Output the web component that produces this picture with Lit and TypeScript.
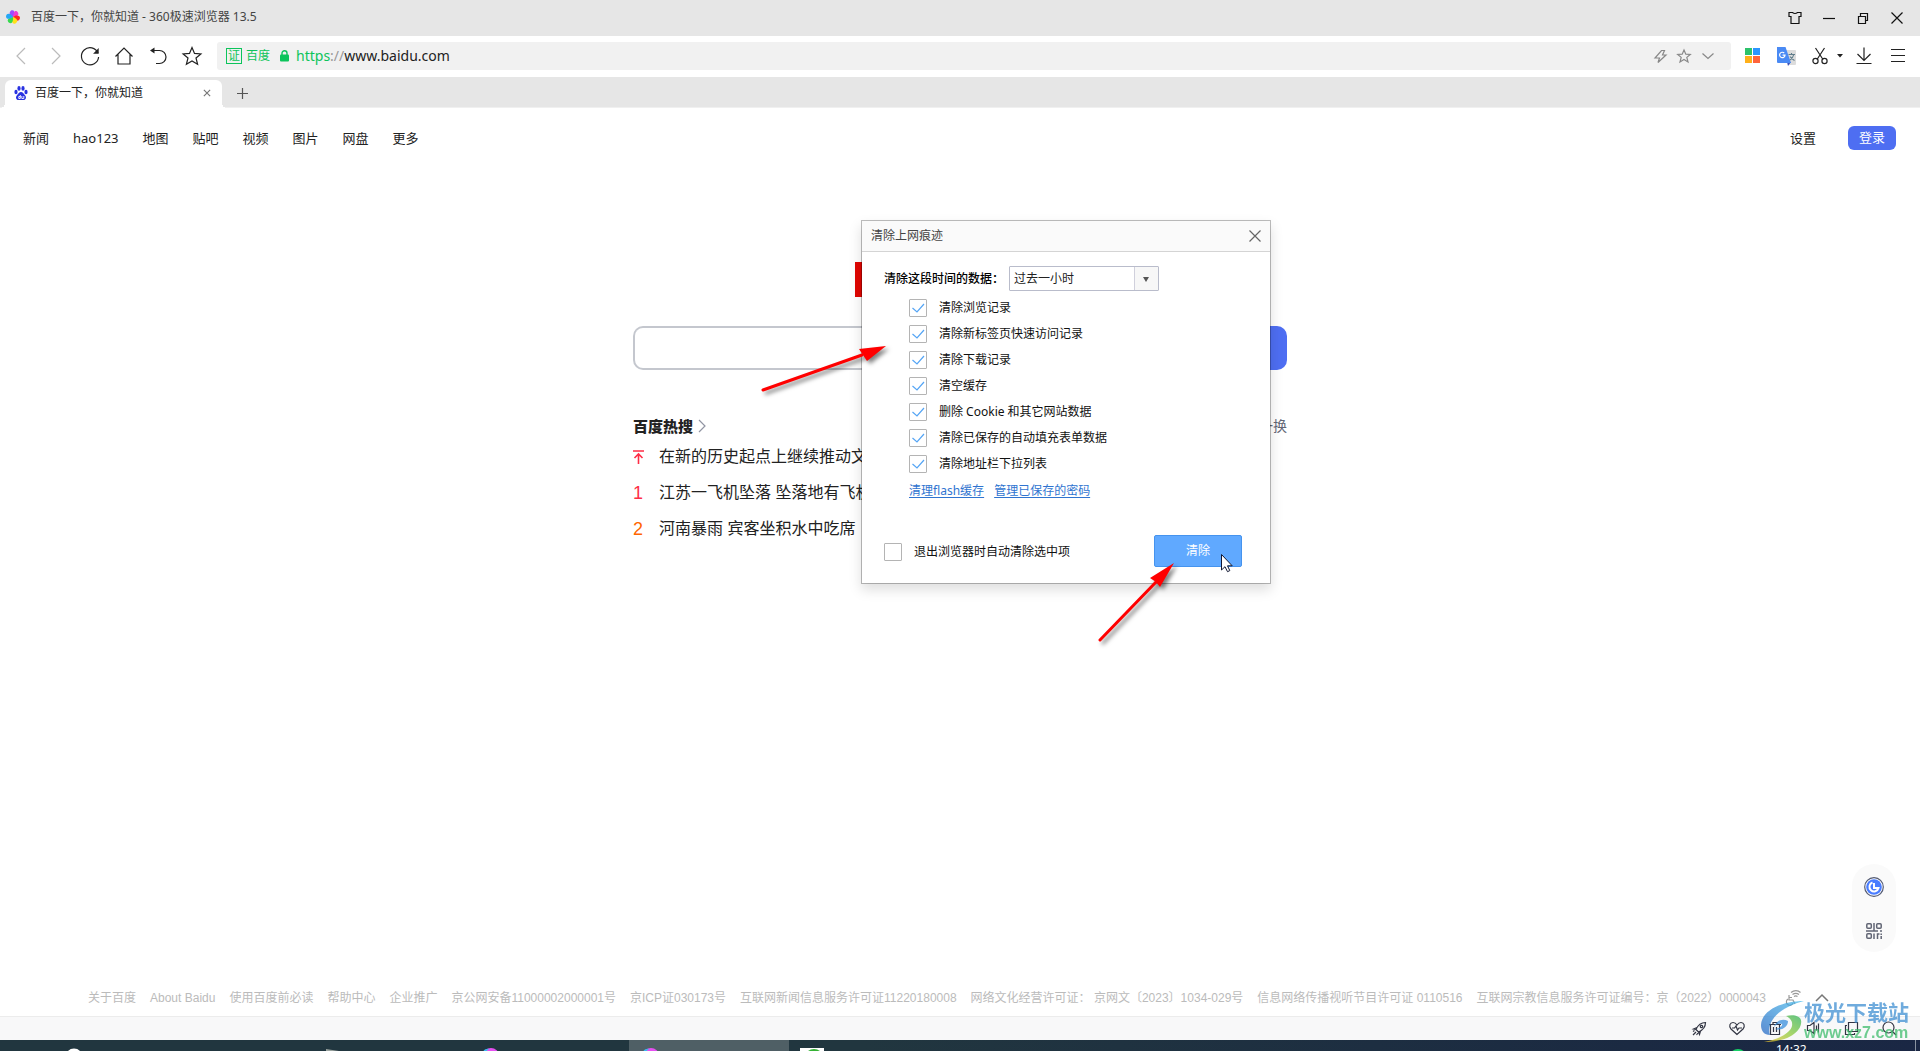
import { LitElement, html, svg, css, TemplateResult, SVGTemplateResult } from "lit";
import { customElement } from "lit/decorators.js";

const icon = (w: number, h: number, body: SVGTemplateResult, cls = "ico"): TemplateResult =>
  html`<svg class=${cls} width=${w} height=${h} viewBox="0 0 ${w} ${h}" aria-hidden="true">${body}</svg>`;

const glyph = {
  back: svg`<path d="M14 2 6 10l8 8"/>`,
  forward: svg`<path d="M6 2l8 8-8 8"/>`,
  reload: svg`<path d="M18 7A8.6 8.6 0 1 0 18.600 11"/><path d="M18.700 2v5.800h-5.600z" class="solid"/>`,
  home: svg`<path d="M1.500 10.500 10 2l8.500 8.500M4 8.500V18h12V8.500"/>`,
  undo: svg`<path d="M3 4.500h8.500a6.500 6.500 0 0 1 0 13H8"/><path d="M6.500 1.500v6L2 4.500z" class="solid"/>`,
  star: svg`<path d="M10 1.500l2.500 5.900 6.400.5-4.900 4.100 1.600 6.300-5.600-3.400-5.600 3.400L6 12 1.100 7.900l6.400-.5z"/>`,
  bolt: svg`<path d="M8.500 1.500h3L9.500 6h3.500L5 13.500 6.500 9H2z"/>`,
  starSmall: svg`<path d="M7 1l1.800 4.200 4.500.3-3.500 2.900 1.200 4.500L7 10.400 3 12.900l1.200-4.500L.7 5.500l4.500-.3z"/>`,
  chevDown: svg`<path d="M1.500 4.500 7 9.500l5.500-5"/>`,
  scissors: svg`<path d="M3.500 1 11 12.500M12.500 1 5 12.500"/><circle cx="3.500" cy="14" r="2.600"/><circle cx="12.500" cy="14" r="2.600"/>`,
  download: svg`<path d="M8 0.500v13M1.500 7 8 13.500 14.500 7M.5 16.500h15"/>`,
  menu: svg`<path d="M0 1.500h14M0 7.500h14M0 13.500h14"/>`,
  shirt: svg`<path d="M4.500 1.500q2.500 2 5 0h3.500v4h-2v7H3v-7H1v-4z"/>`,
  minimise: svg`<path d="M1 7.500h12"/>`,
  restore: svg`<path d="M2.500 5.500h7v7h-7zM4.500 5.500v-3h7v7h-2"/>`,
  close: svg`<path d="M1.500 1.500l11 11M12.500 1.500l-11 11"/>`,
  rocket: svg`<path d="M4 8.500C6 4 9.500 1.500 13.500 1.500c0 4-2.500 7.500-7 9.500zM5 6.500 1.500 8 4 8.500M8.500 10 7.500 13.500 6.500 11M1 14l3-3M4.500 14l1.500-2M1 10.500l1.500-1"/><circle cx="9.500" cy="5.500" r="1.200"/>`,
  heart: svg`<path d="M8 13.500 2 8C-.5 5 1 1.500 4 1.500c2 0 3 1 4 2.500 1-1.500 2-2.500 4-2.500 3 0 4.500 3.500 2 6.500zM3 7h2.500L7 5l1.500 4L10 7h3"/>`,
  trash: svg`<path d="M1 3.500h12M5 3V1.500h4V3M2.500 3.500v10h9v-10M5.500 6v5M8.500 6v5"/>`,
  speaker: svg`<path d="M1.500 4.500H4L8 1.500v11L4 9.500H1.500zM10.500 4.500v5M12.500 2.500v9"/>`,
  windows: svg`<path d="M4.500 1.500h9v9h-9zM3 4.500H1.500v9h9V12"/>`,
  search: svg`<circle cx="6.500" cy="6.500" r="5.500"/><path d="M10.500 10.500l3.500 3.500"/>`,
};

const pinwheel = svg`
  <path d="M7 7C3 6.500 2.500 2.500 5.500.3 9-.5 9.500 3 7 7z" fill="#9b4dff"/>
  <path d="M7 7C7.500 3.500 8 .6 10.500 1 14 3.500 12.500 7 7 7z" fill="#f13ad0"/>
  <path d="M7 7c2.500-2.500 7-2 7 .8C13.800 11.500 9.500 12 7 7z" fill="#ff2a1f"/>
  <path d="M7 7c4 1.500 6 4 2.500 6.500C6 14.500 5 11 7 7z" fill="#ffe11a"/>
  <path d="M7 7c.5 4-1 7.500-4 5.800C.3 10.500 2 7.500 7 7z" fill="#37d94e"/>
  <path d="M7 7C3.500 9.500 0 9.500 0 6.200.6 2.600 4.500 3 7 7z" fill="#24a7f5"/>`;

const paw = svg`<g fill="#2932e1">
  <ellipse cx="2" cy="6" rx="1.600" ry="2.200"/><ellipse cx="5" cy="2.400" rx="1.600" ry="2.300"/>
  <ellipse cx="9" cy="2.400" rx="1.600" ry="2.300"/><ellipse cx="12" cy="6" rx="1.600" ry="2.200"/>
  <path d="M7 6c1.800 0 2.500 1.800 4 3.200 1.800 1.800 1 4.800-1.500 4.800h-5C2 14 1.200 11 3 9.200 4.500 7.800 5.200 6 7 6z"/></g>
  <path d="M6.300 9v3.500H4.800v-2h1.500M7.800 10v2.500h2V10" fill="none" stroke="#fff" stroke-width=".9"/>`;

const disc = svg`<circle cx="13" cy="16" r="8" fill="#e54ff0"/><path d="M4 17c-1-5 3-9 7-8-3 2-4 4-4 8z" fill="#3bb6f0"/>`;

const CHECKS = [
  "清除浏览记录",
  "清除新标签页快速访问记录",
  "清除下载记录",
  "清空缓存",
  "删除 Cookie 和其它网站数据",
  "清除已保存的自动填充表单数据",
  "清除地址栏下拉列表",
];
const NAV = ["新闻", "hao123", "地图", "贴吧", "视频", "图片", "网盘", "更多"];
const LEGAL = [
  "关于百度",
  "About Baidu",
  "使用百度前必读",
  "帮助中心",
  "企业推广",
  "京公网安备11000002000001号",
  "京ICP证030173号",
  "互联网新闻信息服务许可证11220180008",
  "网络文化经营许可证： 京网文〔2023〕1034-029号",
  "信息网络传播视听节目许可证 0110516",
  "互联网宗教信息服务许可证编号：京（2022）0000043",
];

@customElement("browser-chrome")
class BrowserChrome extends LitElement {
  static styles = css`
    :host { display: block; color: #222; font-size: 12px; line-height: 18px; }
    * { box-sizing: border-box; }
    button { border: 0; background: none; padding: 0; color: inherit; font: inherit; display: flex; align-items: center; justify-content: center; }
    .ico { display: block; fill: none; stroke: currentColor; stroke-width: 1.200; overflow: visible; }
    .solid { fill: currentColor; stroke: none; }
    .raw { display: block; flex: none; }
    .title { display: flex; align-items: center; height: 36px; background: #e6e6e6; padding: 0 6px 2px; color: #444; }
    .title .name { margin-left: 11px; flex: 1; }
    .title .win { width: 34px; height: 34px; margin-top: 2px; color: #111; }
    .tools { display: flex; align-items: center; height: 41px; background: #fff; padding: 0 5px 2px 3px; }
    .tools > button { width: 34px; height: 34px; flex: none; }
    .tools > .dim { color: #bbb; width: 35px; }
    .address { flex: 1; display: flex; align-items: center; height: 28px; margin: 0 4px 0 8px; padding: 0 11px 0 9px; background: #f1f1f1; border-radius: 3px; }
    .cert { width: 16px; height: 16px; border: 1px solid #0cc45b; color: #0cc45b; line-height: 14px; text-align: center; }
    .site { color: #0cc45b; margin: 0 10px 0 4px; }
    .url { flex: 1; margin-left: 7px; font-size: 14px; line-height: 20px; }
    .url .secure { color: #0cc45b; }
    .url .sep { color: #999; }
    .address button { width: 24px; height: 24px; color: #888; }
    .tools > .caret { width: 14px; }
    .tools > .snip { width: 26px; margin-left: 4px; }
    .tabs { display: flex; align-items: flex-end; height: 31px; background: #e6e6e6; border-bottom: 1px solid #f0f0f0; padding-left: 5px; }
    .tab { position: relative; display: flex; align-items: center; width: 217px; height: 28px; margin-bottom: -1px; background: #fff; border-radius: 6px 6px 0 0; padding: 0 8px 2px 9px; }
    .tab::before, .tab::after { content: ""; position: absolute; bottom: 0; width: 5px; height: 5px; }
    .tab::before { right: 100%; background: radial-gradient(circle at 0 0, transparent 5px, #fff 5px); }
    .tab::after { left: 100%; background: radial-gradient(circle at 100% 0, transparent 5px, #fff 5px); }
    .tab .label { flex: 1; margin-left: 7px; }
    .tab button { width: 14px; height: 14px; color: #777; }
    .add { width: 40px; height: 29px; color: #555; }
  `;
  render() {
    return html`
      <div class="title">
        <svg class="raw" width="14" height="14" viewBox="0 0 14 14" aria-hidden="true">${pinwheel}</svg>
        <span class="name">百度一下，你就知道 - 360极速浏览器 13.5</span>
        <button class="win" aria-label="皮肤">${icon(14, 14, glyph.shirt)}</button>
        <button class="win" aria-label="最小化">${icon(14, 14, glyph.minimise)}</button>
        <button class="win" aria-label="还原">${icon(14, 14, glyph.restore)}</button>
        <button class="win" aria-label="关闭">${icon(14, 14, glyph.close)}</button>
      </div>
      <div class="tools">
        <button class="dim" aria-label="后退">${icon(20, 20, glyph.back)}</button>
        <button class="dim" aria-label="前进">${icon(20, 20, glyph.forward)}</button>
        <button aria-label="刷新">${icon(20, 20, glyph.reload)}</button>
        <button aria-label="主页">${icon(20, 20, glyph.home)}</button>
        <button aria-label="恢复">${icon(20, 20, glyph.undo)}</button>
        <button aria-label="收藏">${icon(20, 20, glyph.star)}</button>
        <div class="address">
          <span class="cert">证</span><span class="site">百度</span>
          <svg class="raw" width="9" height="12" viewBox="0 0 9 12" aria-hidden="true">
            <rect y="4.500" width="9" height="7" rx="1" fill="#0cc45b"/>
            <path d="M2 5V3.200a2.500 2.500 0 0 1 5 0V5" fill="none" stroke="#0cc45b" stroke-width="1.400"/>
          </svg>
          <span class="url"><span class="secure">https</span><span class="sep">://</span>www.baidu.com</span>
          <button aria-label="加速">${icon(14, 14, glyph.bolt)}</button>
          <button aria-label="收藏此页">${icon(14, 14, glyph.starSmall)}</button>
          <button aria-label="展开">${icon(14, 14, glyph.chevDown)}</button>
        </div>
        <button aria-label="应用">
          <svg class="raw" width="15" height="15" viewBox="0 0 15 15">
            <path d="M0 0h7v7H0z" fill="#2dc26b"/><path d="M8 0h7v7H8z" fill="#2b95ff"/>
            <path d="M0 8h7v7H0z" fill="#ffb01a"/><path d="M8 8h7v7H8z" fill="#ff643c"/>
          </svg>
        </button>
        <button aria-label="翻译">
          <svg class="raw" width="20" height="20" viewBox="0 0 20 20">
            <path d="M8 4h11a1 1 0 0 1 1 1v13a1 1 0 0 1-1 1h-6z" fill="#dcdcdc"/>
            <path d="M12.500 8.500H19M15.500 7v1.500M17.800 8.500c-.5 2.500-2.500 4.500-4 5.500M14 10.500c1 1.500 2.500 3 4.500 4" fill="none" stroke="#607d8b" stroke-width="1.100"/>
            <path d="M11 16h4l-3 4z" fill="#3a4fb8"/>
            <path d="M1 1h8.500L15 17H2a1 1 0 0 1-1-1z" fill="#4a8af4"/>
            <path d="M8.200 7A2.700 2.700 0 1 0 9 9.200H6.600" fill="none" stroke="#fff" stroke-width="1.200"/>
          </svg>
        </button>
        <button class="snip" aria-label="截图">${icon(16, 17, glyph.scissors)}</button>
        <button class="caret" aria-label="截图选项"><svg class="raw" width="6" height="4" viewBox="0 0 6 4"><path d="M0 0h6L3 3.500z" fill="#222"/></svg></button>
        <button aria-label="下载">${icon(16, 17, glyph.download)}</button>
        <button aria-label="菜单">${icon(14, 15, glyph.menu)}</button>
      </div>
      <div class="tabs">
        <div class="tab">
          <svg class="raw" width="14" height="14" viewBox="0 0 14 14" aria-hidden="true">${paw}</svg>
          <span class="label">百度一下，你就知道</span>
          <button aria-label="关闭标签页"><svg class="ico" width="8" height="8" viewBox="0 0 14 14"><path d="M1.500 1.500l11 11M12.500 1.500l-11 11" stroke-width="2"/></svg></button>
        </div>
        <button class="add" aria-label="新标签页">${icon(12, 12, svg`<path d="M6.500 1v11M1 6.500h11"/>`)}</button>
      </div>`;
  }
}

@customElement("clear-dialog")
class ClearDialog extends LitElement {
  static styles = css`
    :host { display: block; width: 410px; background: #fff; background-clip: padding-box; border: 1px solid rgba(0, 0, 0, 0.26); box-shadow: 0 6px 12px rgba(0, 0, 0, 0.13); color: #111; font-size: 12px; line-height: 18px; }
    * { box-sizing: border-box; }
    .head { display: flex; align-items: center; justify-content: space-between; height: 31px; padding: 0 8px 0 9px; background: #fafafa; border-bottom: 1px solid #d4d4d4; color: #444; }
    .head button { display: flex; padding: 0; border: 0; background: none; color: #666; }
    .ico { display: block; fill: none; stroke: currentColor; stroke-width: 1.200; }
    .body { padding: 14px 22px 16px; }
    .range { display: flex; align-items: center; gap: 5px; margin-bottom: 4px; }
    .range label { font-weight: 500; color: #000; }
    select { width: 150px; height: 25px; padding: 0 30px 0 4px; border: 1px solid #b9bccb; border-radius: 1px; color: #222; font: inherit; appearance: none;
      background: #fff url("data:image/svg+xml,%3Csvg xmlns='http://www.w3.org/2000/svg' width='24' height='23'%3E%3Cpath d='M0 0h24v23H0z' fill='%23f7f7f7'/%3E%3Cpath d='M.5 0v23' stroke='%23d0d0dc'/%3E%3Cpath d='M9 10h6l-3 5z' fill='%23555'/%3E%3C/svg%3E") right center no-repeat; }
    .row { display: flex; align-items: center; gap: 12px; height: 26px; }
    .list { padding-left: 25px; }
    input { flex: none; width: 18px; height: 18px; margin: 0; border: 1px solid #b4b4b4; border-radius: 1px; background: #fff; appearance: none; }
    input:checked { background: #fff url("data:image/svg+xml,%3Csvg xmlns='http://www.w3.org/2000/svg' width='16' height='16'%3E%3Cpath d='M2.500 8l4.500 4 7-8' fill='none' stroke='%2355a5f5' stroke-width='1.200'/%3E%3C/svg%3E") center no-repeat; }
    .links { gap: 10px; padding-top: 2px; }
    a { color: #2f74d0; text-underline-offset: 2px; }
    .foot { display: flex; align-items: center; justify-content: space-between; margin-top: 32px; padding-right: 6px; }
    .foot .row { padding-top: 2px; }
    .go { width: 88px; height: 32px; border: 1px solid #4593ee; border-radius: 2px; background: #60a9ff; color: #fff; font: inherit; padding: 0; }
  `;
  render() {
    return html`
      <div class="head"><span>清除上网痕迹</span>
        <button aria-label="关闭">${icon(14, 14, glyph.close)}</button></div>
      <div class="body">
        <div class="range"><label for="range">清除这段时间的数据：</label>
          <select id="range"><option>过去一小时</option></select></div>
        <div class="list">
          ${CHECKS.map((t) => html`<label class="row"><input type="checkbox" checked />${t}</label>`)}
          <div class="row links"><a href="#flash">清理flash缓存</a><a href="#passwords">管理已保存的密码</a></div>
        </div>
        <div class="foot">
          <label class="row"><input type="checkbox" />退出浏览器时自动清除选中项</label>
          <button class="go">清除</button>
        </div>
      </div>`;
  }
}

@customElement("app-root")
class AppRoot extends LitElement {
  static styles = css`
    :host { display: flex; flex-direction: column; height: 100vh; overflow: hidden; background: #fff; font-family: "Noto Sans", "Noto Sans CJK SC", sans-serif; color: #222; }
    * { box-sizing: border-box; }
    a { color: inherit; text-decoration: none; }
    button { font: inherit; border: 0; padding: 0; }
    .ico { display: block; fill: none; stroke: currentColor; stroke-width: 1.200; overflow: visible; }
    .page { position: relative; flex: 1; display: flex; flex-direction: column; min-height: 0; }
    .nav { display: flex; align-items: center; gap: 24px; height: 60px; padding: 0 24px 0 23px; font-size: 13px; line-height: 20px; }
    .nav .settings { margin-left: auto; }
    .login { width: 48px; height: 24px; margin-left: 8px; border-radius: 6px; background: #4e6ef2; color: #fff; line-height: 20px; padding-bottom: 2px; }
    .column { position: relative; flex: 1; width: 654px; margin: 0 auto; padding-top: 94px; }
    .logo { width: 210px; height: 35px; margin: 0 auto 29px; background: #e10602; }
    .search { display: flex; height: 44px; margin-bottom: 45px; }
    .search input { flex: 1; min-width: 0; border: 2px solid #c4c7ce; border-right: 0; border-radius: 10px 0 0 10px; padding: 0 16px; font: inherit; outline: 0; }
    .search button { width: 108px; border-radius: 0 10px 10px 0; background: #4e6ef2; color: #fff; font-size: 17px; }
    .hot { display: flex; align-items: center; height: 22px; margin-bottom: 2px; }
    .hot h2 { margin: 0; font-size: 15px; line-height: 22px; font-weight: 900; }
    .hot .more { margin-left: 4px; color: #9195a3; }
    .hot .swap { margin-left: auto; background: none; color: #626675; font-size: 14px; line-height: 22px; }
    .topics { list-style: none; margin: 0; padding: 0; font-family: "Liberation Sans", "Noto Sans CJK SC", sans-serif; font-size: 16px; line-height: 36px; }
    .topics li { display: flex; align-items: center; height: 36px; width: 310px; overflow: hidden; white-space: nowrap; }
    .rank { flex: none; width: 26px; font-size: 18px; color: #fe2d46; }
    .rank.second { color: #f60; }
    .badge { margin-left: 7px; padding: 0 2px; border-radius: 4px; background: #f60; color: #fff; font-size: 12px; line-height: 16px; }
    .dialog { position: absolute; left: 228px; top: 52px; }
    .arrow { position: absolute; filter: drop-shadow(3px 3px 2px rgba(0, 0, 0, 0.5)); pointer-events: none; fill: #f00; stroke: #f00; stroke-linecap: round; }
    .arrow-list { left: 122px; top: 172px; }
    .arrow-go { left: 457px; top: 387px; }
    .pointer { position: absolute; left: 587px; top: 385px; pointer-events: none; }
    .float { position: absolute; right: 24px; bottom: 64px; width: 44px; height: 88px; border-radius: 22px; background: #fafafa; display: grid; place-items: center; }
    .float button { display: flex; background: none; }
    .legal { display: flex; align-items: center; gap: 14px; height: 38px; padding: 2px 88px 0; font-family: "Liberation Sans", "Noto Sans CJK SC", sans-serif; font-size: 12px; line-height: 18px; color: #bbb; white-space: nowrap; }
    .legal .access { margin: 0 0 0 5px; color: #999; display: flex; }
    .legal .up { color: #777; }
    .status { display: flex; align-items: center; justify-content: flex-end; gap: 14px; height: 24px; padding: 0 19px 0 0; background: #f8f8f9; border-top: 1px solid #ececec; }
    .status button { display: flex; justify-content: center; width: 24px; background: none; color: #333644; }
    .brand { position: fixed; right: 11px; bottom: 8px; display: flex; align-items: flex-start; pointer-events: none; opacity: 0.75; }
    .brand div { display: flex; flex-direction: column; }
    .brand b { font-size: 21px; line-height: 22px; color: #3f8fd2; }
    .brand i { font-family: "Liberation Sans", sans-serif; font-style: normal; font-weight: 700; font-size: 16px; line-height: 20px; color: #3fbd6c; }
    .taskbar { display: flex; align-items: flex-start; height: 11px; overflow: hidden; background: linear-gradient(90deg, #21363f 0%, #21363f 45%, #1b2a42 85%, #1a2744 100%); }
    .taskbar svg { display: block; flex: none; }
    .slot { width: 160px; height: 11px; padding-left: 9px; }
    .slot.first { width: 309px; padding-left: 61px; }
    .slot.active { background: #4f5f65; }
    .slot.last { width: 46px; padding-left: 11px; }
    .tray { display: flex; margin-left: auto; color: #fff; font-size: 12px; line-height: 16px; }
    .tray .clock { margin: 2px 0 0 28px; width: 139px; }
    .tray .edge { width: 5px; height: 11px; border-left: 1px solid #8a93a1; }
  `;
  render() {
    return html`
      <browser-chrome></browser-chrome>
      <main class="page" lang="zh-CN">
        <nav class="nav">
          ${NAV.map((n) => html`<a href="#${n}">${n}</a>`)}
          <a class="settings" href="#settings">设置</a>
          <button class="login">登录</button>
        </nav>
        <div class="column">
          <div class="logo"></div>
          <div class="search"><input type="text" aria-label="搜索" /><button>百度一下</button></div>
          <div class="hot"><h2>百度热搜</h2>
            <svg class="ico more" width="10" height="14" viewBox="0 0 10 14" aria-hidden="true"><path d="M2 1l6 6-6 6"/></svg>
            <button class="swap">换一换</button></div>
          <ul class="topics">
            <li><span class="rank"><svg class="ico" width="11" height="14" viewBox="0 0 11 14" aria-hidden="true"><path d="M0 1h11M5.500 14V4M1.500 8l4-4 4 4" stroke-width="1.600"/></svg></span><span>在新的历史起点上继续推动文化繁荣</span></li>
            <li><span class="rank">1</span><span>江苏一飞机坠落 坠落地有飞机残骸</span></li>
            <li><span class="rank second">2</span><span>河南暴雨 宾客坐积水中吃席</span><span class="badge">热</span></li>
          </ul>
          <clear-dialog class="dialog" role="dialog" aria-label="清除上网痕迹"></clear-dialog>
          <svg class="arrow arrow-list" width="140" height="65" viewBox="755 340 140 65" aria-hidden="true">
            <path d="M763 390 862 355" stroke-width="3"/><path d="M886 346 867 361 863 355 859 349z" stroke="none"/></svg>
          <svg class="arrow arrow-go" width="95" height="95" viewBox="1090 555 95 95" aria-hidden="true">
            <path d="M1100 640 1157 581" stroke-width="3"/><path d="M1174 563 1160 587 1156 582 1150 578z" stroke="none"/></svg>
          <svg class="pointer" width="14" height="20" viewBox="0 0 14 20" aria-hidden="true">
            <path d="M1.500 1.500v15.500l3.500-3.300 2.500 5 2.300-1.100-2.300-4.800h4.700z" fill="#fff" stroke="#111833"/></svg>
        </div>
        <div class="float">
          <button aria-label="助手"><svg width="20" height="20" viewBox="0 0 20 20">
            <circle cx="10" cy="10" r="9.300" fill="#fff" stroke="#545b73" stroke-width="1.200"/><circle cx="10" cy="10" r="7.800" fill="#4a7dff"/>
            <path d="M8.500 5.500A4.600 4.600 0 1 0 14.500 11H10V6" fill="none" stroke="#fff" stroke-width="2"/></svg></button>
          <button aria-label="二维码"><svg width="16" height="16" viewBox="0 0 16 16" fill="none" stroke="#626675" stroke-width="1.500">
            <rect x=".8" y=".8" width="4.500" height="4.500" rx="1"/><rect x="10.700" y=".8" width="4.500" height="4.500" rx="1"/><rect x=".8" y="10.700" width="4.500" height="4.500" rx="1"/>
            <path d="M8 0v8M0 8h12M14 8h2M8 10.500V16M11.500 16v-5h2M15.200 10.500V12M15.200 13v3"/></svg></button>
        </div>
        <footer class="legal">
          ${LEGAL.map((l) => html`<a href="#legal">${l}</a>`)}
          <a class="access" href="#access" aria-label="无障碍"><svg class="ico" width="16" height="16" viewBox="0 0 16 16">
            <path d="M4 5v5h4l2 4M4 7.500h3M3 9a3.400 3.400 0 1 0 5 4M6 2.500C9 0 13 0 15.500 2.500M7.500 4.500c2-1.500 4.500-1.500 6.500 0M9 6.500c1-.8 2.500-.8 3.500 0"/></svg></a>
          <svg class="ico up" width="14" height="14" viewBox="0 0 14 14" aria-hidden="true"><path d="M1 10l6-6 6 6" stroke-width="1.500"/></svg>
        </footer>
      </main>
      <div class="status">
        <button aria-label="加速">${icon(14, 15, glyph.rocket)}</button>
        <button aria-label="医生">${icon(16, 15, glyph.heart)}</button>
        <button aria-label="清理">${icon(14, 15, glyph.trash)}</button>
        <button aria-label="声音">${icon(14, 15, glyph.speaker)}</button>
        <button aria-label="窗口">${icon(14, 15, glyph.windows)}</button>
        <button aria-label="缩放">${icon(14, 15, glyph.search)}</button>
      </div>
      <div class="taskbar">
        <div class="slot first"><svg width="26" height="26" viewBox="0 0 26 26"><circle cx="13" cy="17" r="7" fill="none" stroke="#fff" stroke-width="3"/></svg></div>
        <div class="slot"><svg width="26" height="26" viewBox="0 0 26 26"><path d="M8 9l13 2v9H8z" fill="#9aa39f"/></svg></div>
        <div class="slot"><svg width="26" height="26" viewBox="0 0 26 26">${disc}</svg></div>
        <div class="slot active"><svg width="26" height="26" viewBox="0 0 26 26">${disc}</svg></div>
        <div class="slot last"><svg width="24" height="26" viewBox="0 0 24 26"><path d="M0 8h24v18H0z" fill="#fff"/><circle cx="14" cy="19" r="10" fill="#35b234"/></svg></div>
        <div class="tray">
          <svg width="20" height="26" viewBox="0 0 20 26"><circle cx="10" cy="18" r="9" fill="#17d168"/></svg>
          <span class="clock">14:32</span>
          <span class="edge"></span>
        </div>
      </div>
      <div class="brand">
        <svg width="44" height="42" viewBox="0 0 44 42" aria-hidden="true">
          <defs>
            <linearGradient id="sky" x1="0" y1="1" x2="1" y2="0"><stop offset="0" stop-color="#2668c4"/><stop offset="1" stop-color="#4fc0ee"/></linearGradient>
            <linearGradient id="leaf" x1="0" y1="1" x2="1" y2="0"><stop offset="0" stop-color="#f2c230"/><stop offset=".5" stop-color="#8fcb3a"/><stop offset="1" stop-color="#2fb35c"/></linearGradient>
          </defs>
          <path d="M44 0C24 0 2 8 1 24c0 6 3 10 9 10-4-14 10-28 34-34z" fill="url(#sky)"/>
          <path d="M14 26c2-6 8-9 14-6 0 6-6 10-13 8 6-1 8-4 7-5-3-1-6 0-8 3z" fill="#3b8fdc"/>
          <path d="M26 15c8-2 17 0 15 8-2 10-16 18-37 18 12-2 26-8 28-16 1-5-2-8-6-10z" fill="url(#leaf)"/>
        </svg>
        <div><b>极光下载站</b><i>www.xz7.com</i></div>
      </div>`;
  }
}
